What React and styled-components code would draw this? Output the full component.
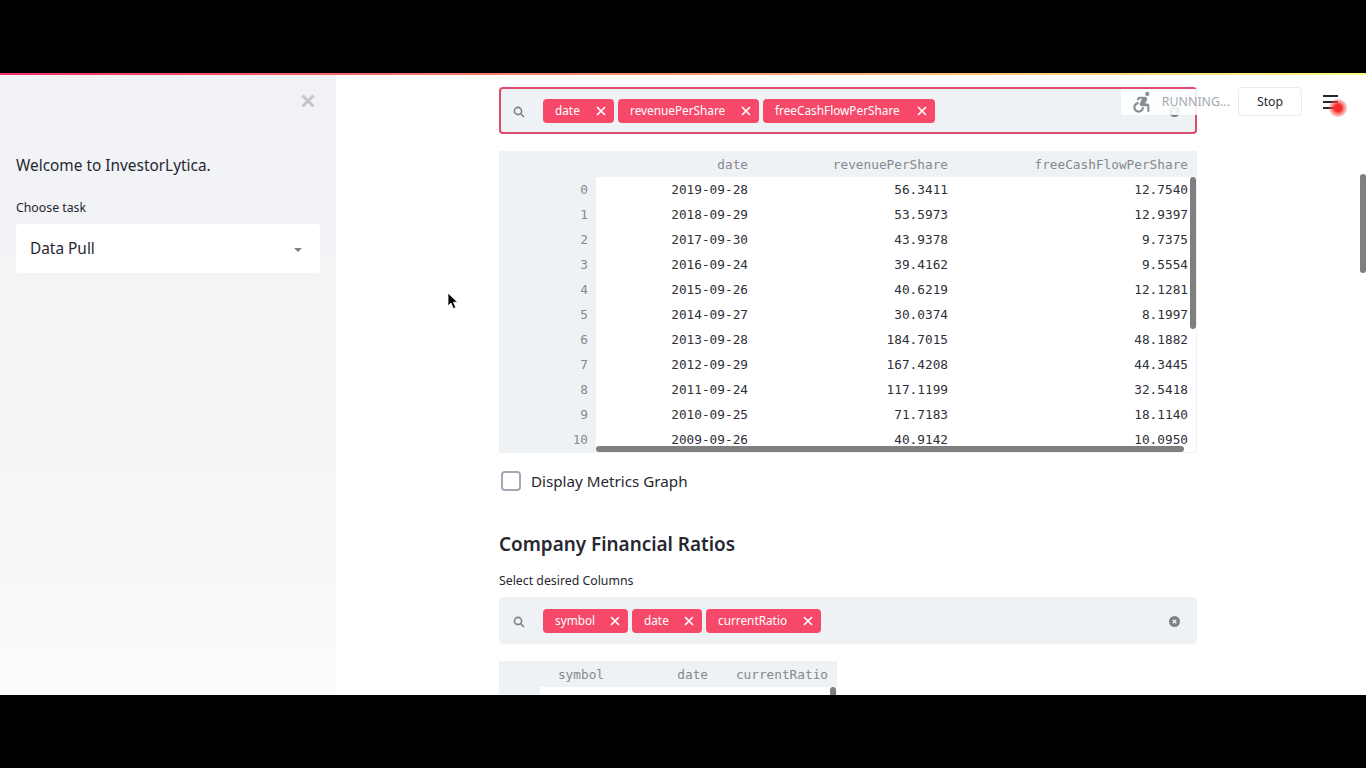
import React from "react";
import styled, { createGlobalStyle } from "styled-components";
import { MdAccessibleForward } from "react-icons/md";

const GlobalStyle = createGlobalStyle`
  html, body {
    margin: 0;
    height: 100%;
    background: #000;
  }
  * {
    box-sizing: border-box;
  }
`;

const Screen = styled.div`
  width: 1366px;
  height: 768px;
  display: flex;
  flex-direction: column;
  background: #000;
  overflow: hidden;
  font-family: "Noto Sans", "Liberation Sans", sans-serif;
  color: #262730;
`;

const Letterbox = styled.div`
  height: ${({ $h }) => $h}px;
  flex: none;
  background: #000;
`;

const Decoration = styled.div`
  height: 2px;
  flex: none;
  background: linear-gradient(90deg, #f63366, #fffd80);
`;

const Stage = styled.div`
  position: relative;
  height: 620px;
  flex: none;
  display: flex;
  background: #fff;
  overflow: hidden;
`;

const Sidebar = styled.aside`
  width: 336px;
  flex: none;
  padding: 0 16px;
  background: linear-gradient(180deg, #f0f2f5 0%, #f4f6f7 65%, #f7f9f9 82%, #fbfbfb 100%);
`;

const CloseRow = styled.div`
  height: 52px;
  display: flex;
  justify-content: flex-end;
  align-items: center;
  padding-right: 5px;
  color: #c3c5c9;
`;

const Welcome = styled.p`
  margin: 28px 0 0;
  font-size: 15.4px;
  line-height: 22px;
`;

const FieldLabel = styled.div`
  font-size: 12.3px;
  line-height: 16px;
  margin-top: ${({ $top }) => $top}px;
  margin-bottom: ${({ $bottom }) => $bottom}px;
`;

const SelectBox = styled.div`
  height: 49px;
  padding: 0 18px 0 14px;
  display: flex;
  align-items: center;
  justify-content: space-between;
  background: #fff;
  border-radius: 4px;
  font-size: 15.4px;
  line-height: 47px;
`;

const Caret = styled.span`
  width: 0;
  height: 0;
  margin-top: 3px;
  border-left: 4px solid transparent;
  border-right: 4px solid transparent;
  border-top: 4px solid #7d8087;
`;

const Main = styled.main`
  flex: 1;
  padding: 12px 0 0 163px;
`;

const Content = styled.div`
  width: 698px;
`;

const SearchBox = styled.div`
  height: 47px;
  display: flex;
  align-items: center;
  padding: 0 ${({ $focused }) => ($focused ? 15 : 17)}px 0 ${({ $focused }) => ($focused ? 12 : 14)}px;
  background: #eff2f5;
  border-radius: 4px;
  border: ${({ $focused }) => ($focused ? "2px solid #dc4a6c" : "none")};
`;

const SearchIcon = styled.svg`
  width: 12px;
  height: 12px;
  flex: none;
  margin-top: 2px;
  margin-right: 18px;
  fill: none;
  stroke: #7d8087;
  stroke-width: 1.6;
`;

const Tag = styled.span`
  width: ${({ $w }) => $w}px;
  height: 24px;
  flex: none;
  margin-right: 4px;
  padding: 0 8px 1px 12px;
  display: flex;
  align-items: center;
  justify-content: space-between;
  border-radius: 4px;
  background: #f6496a;
  color: #fff;
  font-size: 11.8px;
  white-space: nowrap;
`;

const TagClose = styled.svg`
  width: 10px;
  height: 10px;
  flex: none;
  margin-top: 1px;
  stroke: #fff;
  stroke-width: 1.7;
`;

const ClearButton = styled.svg`
  width: 11px;
  height: 11px;
  margin-left: auto;
  margin-top: 2px;
  flex: none;
`;

const TableWrap = styled.div`
  position: relative;
  width: ${({ $w }) => $w}px;
  height: ${({ $h }) => $h}px;
  margin-top: 17px;
  overflow: hidden;
  border-right: 1px solid #eff2f5;
  border-bottom: 1px solid #eff2f5;
  font-family: "DejaVu Sans Mono", "Liberation Mono", monospace;
  font-size: 12.75px;
`;

const Grid = styled.div`
  display: grid;
  grid-template-columns: ${({ $cols }) => $cols};
  grid-template-rows: 26px;
  grid-auto-rows: 25px;
`;

const Cell = styled.div`
  padding-right: 8px;
  line-height: 25px;
  text-align: right;
  white-space: nowrap;
  color: ${({ $head }) => ($head ? "#85888f" : "#2e2f38")};
  background: ${({ $head }) => ($head ? "#eff2f5" : "#fff")};
`;

const HeadCell = styled(Cell).attrs({ $head: true })`
  line-height: 27px;
`;

const ScrollV = styled.div`
  position: absolute;
  top: ${({ $top }) => $top}px;
  right: 0;
  width: 6px;
  height: ${({ $h }) => $h}px;
  border-radius: 3px;
  background: #7f7f7f;
`;

const ScrollH = styled.div`
  position: absolute;
  left: 97px;
  bottom: 0;
  width: 588px;
  height: 6px;
  border-radius: 3px;
  background: #7f7f7f;
`;

const CheckRow = styled.label`
  display: flex;
  align-items: center;
  gap: 10px;
  margin: 17px 0 0 2px;
  height: 22px;
  font-size: 15.2px;
`;

const CheckBox = styled.span`
  width: 20px;
  height: 20px;
  border: 2px solid #a3a8b4;
  border-radius: 4px;
  background: #fff;
`;

const Heading = styled.h2`
  margin: 38px 0 0;
  font-size: 18.9px;
  line-height: 28px;
  font-weight: 600;
`;

const PageScroll = styled.div`
  position: absolute;
  top: 99px;
  right: 0;
  width: 6px;
  height: 99px;
  border-radius: 3px;
  background: #7f7f7f;
`;

const Toolbar = styled.div`
  position: absolute;
  top: 12px;
  right: 28px;
  display: flex;
  align-items: center;
`;

const Running = styled.div`
  width: 109px;
  height: 26px;
  margin-right: 8px;
  padding-left: 8px;
  display: flex;
  align-items: center;
  gap: 7px;
  background: rgba(255, 255, 255, 0.88);
  color: #a3a8b4;
  font-size: 12.4px;
  white-space: nowrap;
`;

const StopButton = styled.div`
  width: 64px;
  height: 29px;
  margin-right: 21px;
  display: flex;
  align-items: center;
  justify-content: center;
  border: 1px solid #e6eaf1;
  border-radius: 4px;
  background: #fff;
  font-size: 12.3px;
`;

const Hamburger = styled.div`
  position: relative;
  width: 15px;
  height: 14px;
  display: flex;
  flex-direction: column;
  justify-content: space-between;

  span {
    height: 2px;
    background: #262730;
  }
`;

const RecordDot = styled.i`
  position: absolute;
  top: 4px;
  left: 6px;
  width: 18px;
  height: 18px;
  border-radius: 50%;
  background: radial-gradient(
    circle,
    #f4262c 0%,
    #f5302f 28%,
    rgba(246, 80, 80, 0.5) 55%,
    rgba(246, 80, 80, 0) 100%
  );
`;

const Cursor = styled.svg`
  position: absolute;
  left: 447px;
  top: 217px;
  width: 11px;
  height: 18px;
`;

const metrics = [
  ["2019-09-28", "56.3411", "12.7540"],
  ["2018-09-29", "53.5973", "12.9397"],
  ["2017-09-30", "43.9378", "9.7375"],
  ["2016-09-24", "39.4162", "9.5554"],
  ["2015-09-26", "40.6219", "12.1281"],
  ["2014-09-27", "30.0374", "8.1997"],
  ["2013-09-28", "184.7015", "48.1882"],
  ["2012-09-29", "167.4208", "44.3445"],
  ["2011-09-24", "117.1199", "32.5418"],
  ["2010-09-25", "71.7183", "18.1140"],
  ["2009-09-26", "40.9142", "10.0950"],
];

const MultiSelect = ({ tags, focused }) => (
  <SearchBox $focused={focused}>
    <SearchIcon viewBox="0 0 12 12">
      <circle cx="5" cy="5" r="3.6" />
      <path d="M7.7 7.7 11 11" />
    </SearchIcon>
    {tags.map(([label, w]) => (
      <Tag key={label} $w={w}>
        {label}
        <TagClose viewBox="0 0 10 10">
          <path d="M1 1l8 8M9 1l-8 8" />
        </TagClose>
      </Tag>
    ))}
    <ClearButton viewBox="0 0 11 11">
      <circle cx="5.5" cy="5.5" r="5.5" fill="#7d8087" />
      <path d="M3.7 3.7l3.6 3.6M7.3 3.7l-3.6 3.6" stroke="#f0f2f6" strokeWidth="1.3" />
    </ClearButton>
  </SearchBox>
);

const App = () => (
  <Screen>
    <GlobalStyle />
    <Letterbox $h={73} />
    <Decoration />
    <Stage>
      <Sidebar>
        <CloseRow>
          <svg width="14" height="14" viewBox="0 0 14 14">
            <path d="M1.5 1.5l11 11M12.5 1.5l-11 11" stroke="currentColor" strokeWidth="3" />
          </svg>
        </CloseRow>
        <Welcome>Welcome to InvestorLytica.</Welcome>
        <FieldLabel $top={23} $bottom={8}>Choose task</FieldLabel>
        <SelectBox>
          Data Pull
          <Caret />
        </SelectBox>
      </Sidebar>
      <Main>
        <Content>
          <MultiSelect
            focused
            tags={[
              ["date", 71],
              ["revenuePerShare", 141],
              ["freeCashFlowPerShare", 172],
            ]}
          />
          <TableWrap $w={698} $h={302}>
            <Grid $cols="97px 160px 200px 240px">
              <HeadCell />
              <HeadCell>date</HeadCell>
              <HeadCell>revenuePerShare</HeadCell>
              <HeadCell>freeCashFlowPerShare</HeadCell>
              {metrics.map((row, i) => (
                <React.Fragment key={row[0]}>
                  <Cell $head>{i}</Cell>
                  {row.map((value) => (
                    <Cell key={value}>{value}</Cell>
                  ))}
                </React.Fragment>
              ))}
            </Grid>
            <ScrollV $top={26} $h={152} />
            <ScrollH />
          </TableWrap>
          <CheckRow>
            <CheckBox />
            Display Metrics Graph
          </CheckRow>
          <Heading>Company Financial Ratios</Heading>
          <FieldLabel $top={15} $bottom={8}>Select desired Columns</FieldLabel>
          <MultiSelect
            tags={[
              ["symbol", 85],
              ["date", 70],
              ["currentRatio", 115],
            ]}
          />
          <TableWrap $w={338} $h={60}>
            <Grid $cols="41px 72px 104px 120px">
              <HeadCell />
              <HeadCell>symbol</HeadCell>
              <HeadCell>date</HeadCell>
              <HeadCell>currentRatio</HeadCell>
              <Cell $head />
              <Cell />
              <Cell />
              <Cell />
            </Grid>
            <ScrollV $top={26} $h={30} />
          </TableWrap>
        </Content>
      </Main>
      <PageScroll />
      <Toolbar>
        <Running>
          <MdAccessibleForward size={26} color="#8a8e96" />
          RUNNING...
        </Running>
        <StopButton>Stop</StopButton>
        <Hamburger>
          <span />
          <span />
          <span />
          <RecordDot />
        </Hamburger>
      </Toolbar>
      <Cursor viewBox="0 0 11 18">
        <path d="M1 1v13l3-3 2.4 5.6 2.4-1L6.4 10.2H10.5z" fill="#000" stroke="#fff" strokeWidth="0.8" />
      </Cursor>
    </Stage>
    <Letterbox $h={73} />
  </Screen>
);

export default App;
